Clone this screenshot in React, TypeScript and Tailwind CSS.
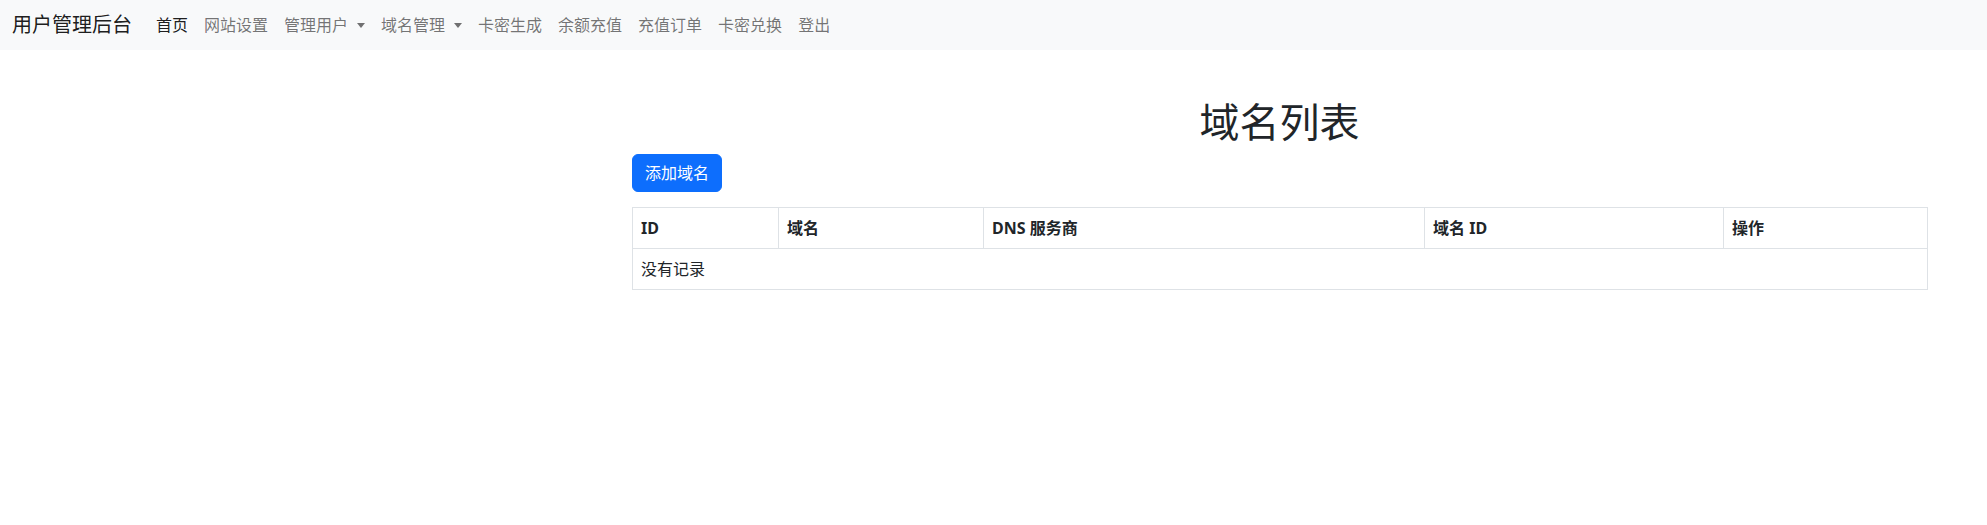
import React from 'react';

const links = [
  { label: '首页', active: true },
  { label: '网站设置' },
  { label: '管理用户', dropdown: true },
  { label: '域名管理', dropdown: true },
  { label: '卡密生成' },
  { label: '余额充值' },
  { label: '充值订单' },
  { label: '卡密兑换' },
  { label: '登出' },
];

const columns = [
  { label: 'ID', w: 'w-[146px]' },
  { label: '域名', w: 'w-[205px]' },
  { label: 'DNS 服务商', w: 'w-[441px]' },
  { label: '域名 ID', w: 'w-[299px]' },
  { label: '操作', w: 'w-[204px]' },
];

function App() {
  return (
    <div className="min-h-screen bg-white text-[#212529] text-base leading-6 font-['Noto_Sans','Noto_Sans_CJK_SC',sans-serif]">
      <nav className="h-[50px] bg-[#f8f9fa] flex items-center px-3">
        <a className="text-xl leading-[30px] text-black/90 mr-4">用户管理后台</a>
        <ul className="flex items-center">
          {links.map((l) => (
            <li key={l.label}>
              <a className={`flex items-center px-2 py-2 ${l.active ? 'text-black/90' : 'text-black/55'}`}>
                {l.label}
                {l.dropdown && (
                  <span className="ml-[9px] w-0 h-0 border-x-[4px] border-x-transparent border-t-[5px] border-t-current" />
                )}
              </a>
            </li>
          ))}
        </ul>
      </nav>

      <main className="pl-[632px] pr-[60px] pt-12">
        <h1 className="text-[40px] leading-[48px] font-normal text-center mb-2">域名列表</h1>
        <button className="bg-[#0d6efd] text-white rounded-md px-3 py-[6px] border border-[#0d6efd] leading-6 mb-[15px]">
          添加域名
        </button>
        <table className="w-full table-fixed border-collapse border border-[#dee2e6]">
          <thead>
            <tr>
              {columns.map((c) => (
                <th key={c.label} className={`${c.w} border border-[#dee2e6] px-2 py-2 text-left font-bold`}>
                  {c.label}
                </th>
              ))}
            </tr>
          </thead>
          <tbody>
            <tr>
              <td colSpan={5} className="border border-[#dee2e6] px-2 py-2">没有记录</td>
            </tr>
          </tbody>
        </table>
      </main>
    </div>
  );
}

export default App;
